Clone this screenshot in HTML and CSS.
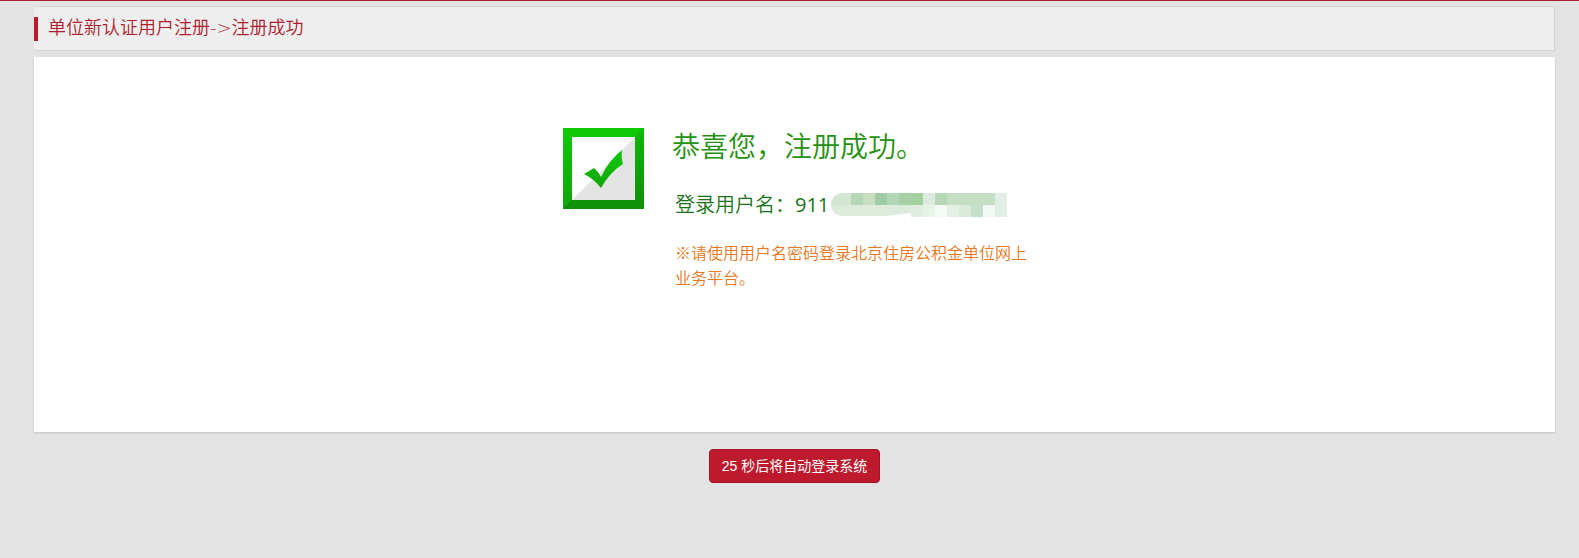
FILE: index.html
```html
<!DOCTYPE html>
<html lang="zh-CN">
<head>
    <meta charset="UTF-8">
    <meta name="viewport" content="width=device-width, initial-scale=1.0">
    <title>注册成功</title>
    <link rel="stylesheet" href="styles.css">
</head>
<body>

<div class="page">
    <div class="title-bar">
        <h1 class="title">单位新认证用户注册-&gt;注册成功</h1>
    </div>

    <div class="panel">
        <svg class="success-icon" width="82" height="82" viewBox="0 0 82 82" aria-hidden="true">
            <defs>
                <linearGradient id="light" x1="0" y1="0" x2="0" y2="1">
                    <stop offset="0" stop-color="#0fcb06"/>
                    <stop offset="1" stop-color="#12a30a"/>
                </linearGradient>
                <linearGradient id="dark" x1="0" y1="0" x2="0" y2="1">
                    <stop offset="0" stop-color="#0fb807"/>
                    <stop offset="1" stop-color="#0f8f08"/>
                </linearGradient>
            </defs>
            <rect width="81" height="81" fill="url(#light)"/>
            <path d="M81 0V81H0Z" fill="url(#dark)"/>
            <rect x="9" y="9" width="63" height="63" fill="#fff"/>
            <path d="M72 9V72H9Z" fill="#e4e4e4"/>
            <path d="M21 46L31 40Q35 43 38 49Q46 32 59 22Q58 30 60 36Q47 44 38 60Q31 51 21 46Z" fill="url(#light)"/>
        </svg>

        <div class="message">
            <h2 class="message-title">恭喜您，注册成功。</h2>
            <p class="user-name">登录用户名：<span class="user-id">911</span><svg class="mask" width="176" height="24" viewBox="4 0 176 24" aria-hidden="true">
                <clipPath id="brush"><path d="M4 12Q5 0 18 0H180V24H84V20L58 23H14Q5 22 4 12Z"/></clipPath>
                <g clip-path="url(#brush)">
                    <rect width="180" height="24" fill="#dcebdb"/>
                    <rect width="24" height="12" fill="#d3e6d2"/>
                    <rect x="24" width="12" height="12" fill="#b5d6b7"/>
                    <rect x="36" width="12" height="12" fill="#c8dfbf"/>
                    <rect x="48" width="12" height="12" fill="#9dcba3"/>
                    <rect x="60" width="12" height="12" fill="#b3d6b6"/>
                    <rect x="72" width="12" height="12" fill="#a8d0a5"/>
                    <rect x="84" width="12" height="12" fill="#a4d09d"/>
                    <rect x="84" y="12" width="12" height="12" fill="#deede0"/>
                    <rect x="96" width="12" height="12" fill="#dcebde"/>
                    <rect x="96" y="12" width="12" height="12" fill="#e7f2e8"/>
                    <rect x="108" width="12" height="12" fill="#b7d8b6"/>
                    <rect x="108" y="12" width="12" height="12" fill="#f4faf4"/>
                    <rect x="120" width="48" height="12" fill="#c4dfc4"/>
                    <rect x="120" y="12" width="12" height="12" fill="#e5f1e6"/>
                    <rect x="132" y="12" width="12" height="12" fill="#d9eadb"/>
                    <rect x="144" y="12" width="12" height="12" fill="#c5dfc8"/>
                    <rect x="156" y="12" width="12" height="12" fill="#f2f8f3"/>
                    <rect x="168" width="12" height="24" fill="#e1eee3"/>
                </g>
            </svg></p>
            <p class="tip">※请使用用户名密码登录北京住房公积金单位网上业务平台。</p>
        </div>
    </div>

    <div class="actions">
        <button type="button" class="login-btn">25 秒后将自动登录系统</button>
    </div>
</div>

</body>
</html>
```

FILE: styles.css
```css
body {
    margin: 0;
    background-color: #e3e3e3;
    border-top: 1px solid #ad1a33;
    font-family: "Open Sans", "Noto Sans CJK SC", sans-serif;
}

.page {
    margin: 5px 24px 0 34px;
}

.title-bar {
    box-sizing: border-box;
    height: 45px;
    padding-top: 10px;
    background-color: #eee;
    border: 1px solid #d6d6d6;
    border-left: none;
}

.title {
    margin: 0;
    padding: 0 0 3px 10px;
    border-left: 4px solid #be1a2f;
    color: #ae1c2f;
    font-family: "DejaVu Sans", "Noto Sans CJK SC", sans-serif;
    font-size: 18px;
    font-weight: 350;
    line-height: 21px;
}

.panel {
    display: flex;
    justify-content: center;
    gap: 27px;
    box-sizing: border-box;
    min-height: 375px;
    margin-top: 6px;
    padding: 71px 0 0 4px;
    background-color: #fff;
    box-shadow: 0 1px 2px rgba(0, 0, 0, 0.15);
}

.success-icon {
    flex: none;
}

.message {
    width: 358px;
}

.message-title {
    margin: 0;
    color: #259112;
    font-size: 28px;
    font-weight: 350;
    line-height: 36px;
}

.user-name {
    display: flex;
    align-items: center;
    margin: 27px 0 0 3px;
    color: #1a7318;
    font-size: 20px;
    font-weight: 350;
    line-height: 28px;
    white-space: nowrap;
}

.user-id {
    font-weight: 400;
}

.mask {
    margin-left: 2px;
}

.tip {
    margin: 22px 0 0 3px;
    color: #e87722;
    font-size: 16px;
    font-weight: 350;
    line-height: 25px;
}

.actions {
    margin-top: 17px;
    text-align: center;
}

.login-btn {
    height: 34px;
    padding: 0 12px;
    border: 1px solid #a01526;
    border-radius: 4px;
    background-color: #be1a2d;
    color: #fff;
    font-family: "Liberation Sans", "Noto Sans CJK SC", sans-serif;
    font-size: 14px;
    line-height: 20px;
    cursor: pointer;
}

.login-btn:hover {
    background-color: #a01526;
}
```
